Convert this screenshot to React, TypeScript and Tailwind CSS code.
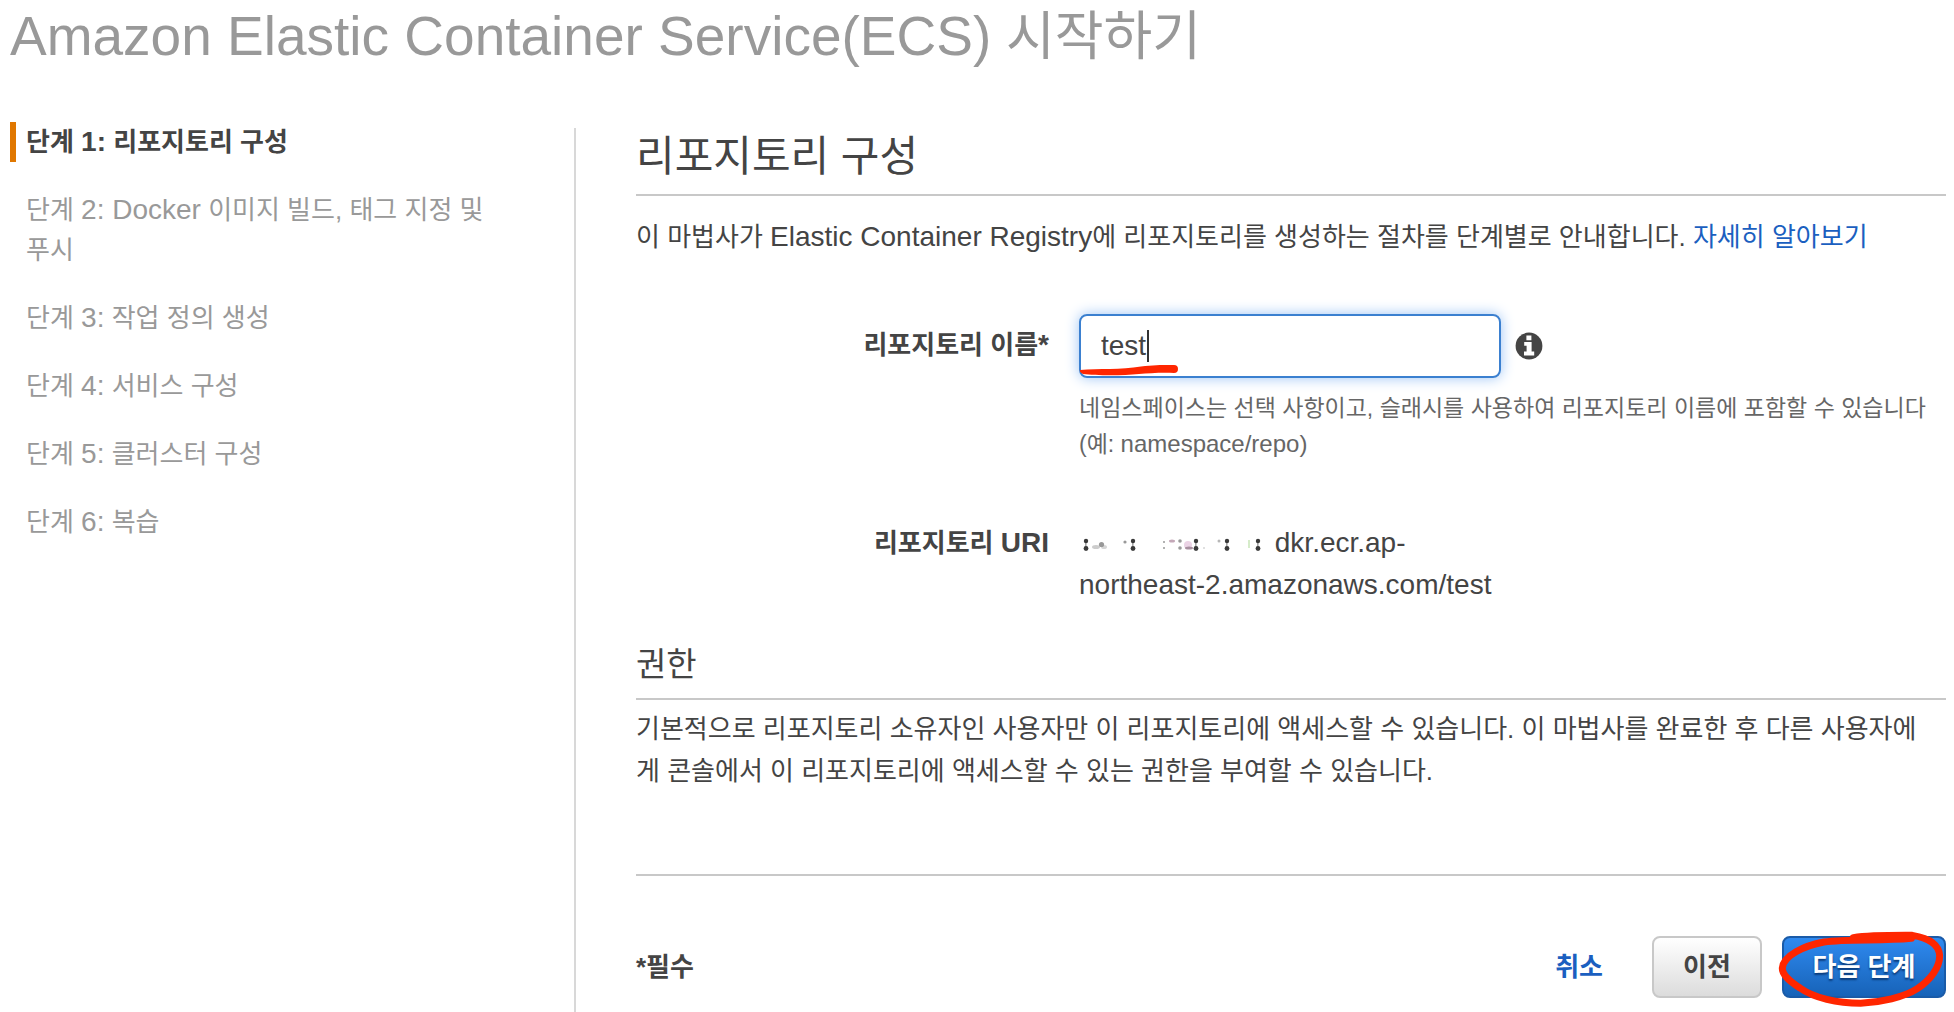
import React from "react";

const steps: React.ReactNode[] = [
  <>단계 <Latin>1:</Latin> 리포지토리 구성</>,
  <>단계 <Latin>2: Docker</Latin> 이미지 빌드, 태그 지정 및 푸시</>,
  <>단계 <Latin>3:</Latin> 작업 정의 생성</>,
  <>단계 <Latin>4:</Latin> 서비스 구성</>,
  <>단계 <Latin>5:</Latin> 클러스터 구성</>,
  <>단계 <Latin>6:</Latin> 복습</>,
];

function Latin({ children }: { children: React.ReactNode }) {
  return <span className="text-[28px]">{children}</span>;
}

function InfoIcon() {
  return (
    <svg viewBox="0 0 28 28" className="size-7" aria-hidden="true">
      <circle cx="14" cy="14" r="13.4" fill="#444" />
      <path d="M11.4 3.4h5v4.8h-5zM9.2 10h7.4v9.6h2.6v4H9v-4h2.6v-5.8H9.2z" fill="#fff" />
    </svg>
  );
}

/* Account number, erased down to a few leftover specks */
function MaskedAccount() {
  return (
    <svg viewBox="0 0 188 20" className="inline-block h-5 w-[188px]" aria-hidden="true">
      <defs>
        <filter id="smudge" x="-10%" y="-50%" width="120%" height="200%">
          <feGaussianBlur stdDeviation="0.7" />
        </filter>
      </defs>
      <g filter="url(#smudge)">
        {[7, 54, 117, 148, 179].map((x) => (
          <g key={x} fill="#3a3a3a">
            <circle cx={x} cy="6" r="2.2" />
            <circle cx={x} cy="13.5" r="2.4" />
            <rect x={x - 1} y="6" width="1.6" height="8" opacity="0.45" />
          </g>
        ))}
        <g fill="#999">
          <circle cx="22.500" cy="9.500" r="2.600" />
          <ellipse cx="17" cy="12" rx="4" ry="2" opacity="0.5" />
          <ellipse cx="25" cy="12" rx="3" ry="2" opacity="0.4" />
          <circle cx="46" cy="7" r="1.600" />
          <circle cx="85" cy="7" r="1" />
          <circle cx="85" cy="13" r="1" />
          <ellipse cx="93" cy="6" rx="3" ry="1.500" fill="#c4a8b8" />
          <circle cx="101" cy="6" r="1.800" />
          <circle cx="101" cy="13" r="1.800" />
          <ellipse cx="109" cy="10" rx="4" ry="4" fill="#d8a8cc" opacity="0.5" />
          <ellipse cx="110" cy="13" rx="4" ry="1.500" fill="#a890a0" />
          <circle cx="125" cy="13" r="1" opacity="0.4" />
          <circle cx="140" cy="6" r="1.500" opacity="0.7" />
          <rect x="169" y="5" width="2" height="8" fill="#d6ecca" />
        </g>
      </g>
    </svg>
  );
}

export default function App() {
  return (
    <div
      lang="ko"
      className="flex min-h-screen flex-col bg-white font-['Liberation_Sans','Noto_Sans_CJK_KR',sans-serif] text-[26px] leading-[42px] text-[#444]"
    >
      <h1 className="px-[10px] text-[53px] leading-[72px] text-[#999]">
        <span className="text-[55px]">Amazon Elastic Container Service(ECS)</span> 시작하기
      </h1>

      <div className="flex flex-1 pt-[49px]">
        <nav className="w-[574px] shrink-0 pl-[10px]" aria-label="단계">
          <ol className="flex flex-col gap-7 leading-10">
            {steps.map((step, i) => (
              <li
                key={i}
                className={
                  i === 0
                    ? "border-l-6 border-[#e07700] pr-[60px] pl-[10px] font-bold"
                    : "border-l-6 border-transparent pr-[60px] pl-[10px] text-[#999]"
                }
              >
                {step}
              </li>
            ))}
          </ol>
        </nav>

        <main className="mt-[6px] flex-1 border-l-2 border-[#d8d8d8] pr-2 pl-[60px]">
          <h2 className="border-b-2 border-[#c8c8c8] pb-2 text-[42px] leading-[58px]">리포지토리 구성</h2>
          <p className="mt-5">
            이 마법사가 <Latin>Elastic Container Registry</Latin>에 리포지토리를 생성하는 절차를 단계별로 안내합니다.{" "}
            <a href="#learn" className="text-[#1b5fc0]">자세히 알아보기</a>
          </p>

          <div className="mt-14 grid grid-cols-[413fr_867fr] gap-x-[30px]">
            <label htmlFor="repo" className="pt-[10px] text-right font-bold">
              리포지토리 이름<Latin>*</Latin>
            </label>
            <div>
              <div className="flex items-center gap-[14px]">
                <div className="relative w-[422px]">
                  <input
                    id="repo"
                    type="text"
                    defaultValue="test"
                    className="block h-16 w-full rounded-lg border-2 border-[#3b80d0] px-5 text-[28px] shadow-[0_0_14px_#9cc4f5] outline-none"
                  />
                  <span className="absolute top-4 left-[68px] h-8 w-[2px] bg-[#333]" aria-hidden="true" />
                  <svg viewBox="0 0 104 16" className="absolute top-12 left-0 h-4 w-[104px]" aria-hidden="true">
                    <path d="M1 8C20 6.500 42 8 62 4.600C76 2.800 86 3 95 3A4 4 0 0 1 95 11C80 10.500 70 11.500 60 12C42 14 16 13.500 4 12Q0 10 1 8Z" fill="#ff2600" />
                  </svg>
                </div>
                <InfoIcon />
              </div>
              <p className="mt-3 text-[23px] leading-9 text-[#666]">
                네임스페이스는 선택 사항이고, 슬래시를 사용하여 리포지토리 이름에 포함할 수 있습니다 (예:{" "}
                <span className="text-[24px]">namespace/repo)</span>
              </p>
            </div>

            <div className="mt-[60px] text-right font-bold">
              리포지토리 <Latin>URI</Latin>
            </div>
            <div className="mt-[60px] w-[430px] text-[28px]">
              <MaskedAccount /> dkr.ecr.ap-northeast-2.amazonaws.com/test
            </div>
          </div>

          <h3 className="mt-[34px] border-b-2 border-[#c8c8c8] pb-2 text-[33px] leading-[50px]">권한</h3>
          <p className="mt-2 pr-4">
            기본적으로 리포지토리 소유자인 사용자만 이 리포지토리에 액세스할 수 있습니다. 이 마법사를 완료한 후 다른 사용자에게 콘솔에서 이 리포지토리에 액세스할 수 있는 권한을 부여할 수 있습니다.
          </p>

          <footer className="mt-[82px] flex items-center border-t-2 border-[#c8c8c8] pt-[60px] font-bold">
            <span className="mr-auto">*필수</span>
            <a href="#cancel" className="mr-[49px] text-[#1b5fc0]">취소</a>
            <button className="mr-5 h-[62px] w-[110px] rounded-lg border-2 border-[#c8c8c8] bg-linear-to-b from-white to-[#dcdcdc]">이전</button>
            <div className="relative">
              <button className="block h-[62px] w-[164px] rounded-lg border-2 border-[#1a5ba8] bg-linear-to-b from-[#2f8af0] to-[#1763b8] text-white [text-shadow:0_2px_2px_#0a3a78]">다음 단계</button>
              <svg
                viewBox="0 0 540 264"
                className="pointer-events-none absolute -top-3 -left-2 h-[88px] w-[180px] max-w-none"
                aria-hidden="true"
              >
                <path
                  d="M238 41C290 33 370 34 415 34C465 42 495 62 497 95C497 130 470 168 430 194C390 220 320 235 260 238C190 238 120 222 78 192C45 170 24 152 25 132C28 95 90 65 150 54C220 43 320 52 412 43"
                  fill="none"
                  stroke="#ff2600"
                  strokeWidth="21"
                  strokeLinecap="round"
                  strokeLinejoin="round"
                />
              </svg>
            </div>
          </footer>
        </main>
      </div>
    </div>
  );
}
